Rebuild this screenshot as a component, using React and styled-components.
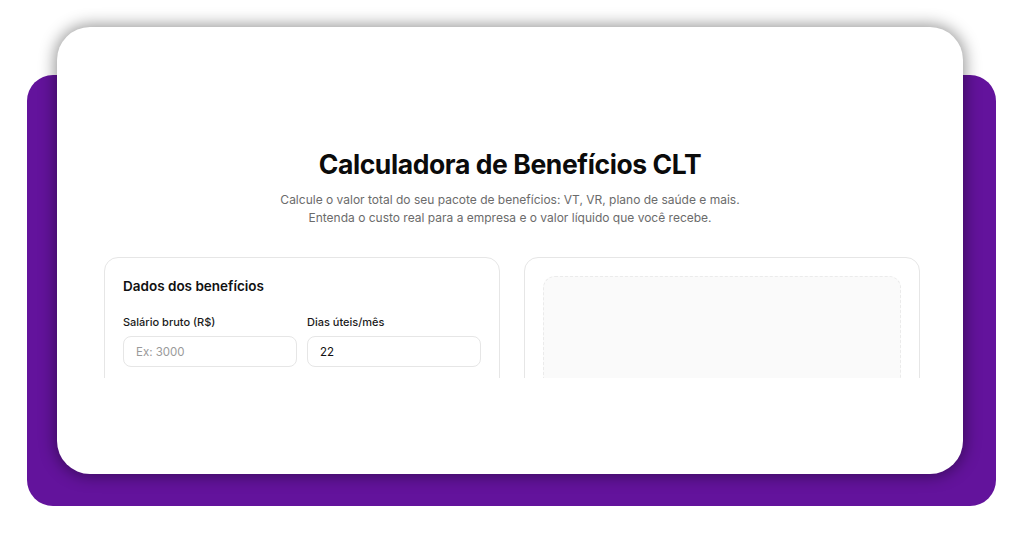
import styled, { createGlobalStyle } from "styled-components";

const Global = createGlobalStyle`
  html, body {
    margin: 0;
    padding: 0;
    background: #ffffff;
  }
  body {
    font-family: Inter, "Noto Sans", "Liberation Sans", sans-serif;
    color: #111111;
  }
  * { box-sizing: border-box; }
`;

const App = () => {
  return (
    <>
      <Global />
      <Stage>
        <Backdrop />
        <Window>
          <Viewport>
            <Title>Calculadora de Benefícios CLT</Title>
            <Subtitle>
              Calcule o valor total do seu pacote de benefícios: VT, VR, plano de saúde e mais.
              <br />
              Entenda o custo real para a empresa e o valor líquido que você recebe.
            </Subtitle>
            <Columns>
              <Card>
                <CardTitle>Dados dos benefícios</CardTitle>
                <FieldRow>
                  <Field>
                    <Label>Salário bruto (R$)</Label>
                    <Input placeholder="Ex: 3000" />
                  </Field>
                  <Field>
                    <Label>Dias úteis/mês</Label>
                    <Input defaultValue="22" />
                  </Field>
                </FieldRow>
              </Card>
              <Card>
                <ResultPlaceholder />
              </Card>
            </Columns>
          </Viewport>
        </Window>
      </Stage>
    </>
  );
};

export default App;

const Stage = styled.div`
  display: grid;
  width: 1024px;
  height: 536px;
  overflow: hidden;
`;

const Backdrop = styled.div`
  grid-area: 1 / 1;
  margin: 75px 0 0 27px;
  width: 969px;
  height: 431px;
  background: #63139c;
  border-radius: 26px;
`;

const Window = styled.div`
  grid-area: 1 / 1;
  margin: 27px 0 0 57px;
  width: 906px;
  height: 447px;
  background: #ffffff;
  border-radius: 33px;
  box-shadow: 0 0 16px 2px rgba(0, 0, 0, 0.42);
`;

const Viewport = styled.div`
  height: 351px;
  overflow: hidden;
  padding-top: 119px;
  display: flex;
  flex-direction: column;
  align-items: center;
`;

const Title = styled.h1`
  margin: 0;
  font-size: 26.5px;
  line-height: 36px;
  font-weight: 700;
  letter-spacing: -0.4px;
  color: #0b0b0b;
`;

const Subtitle = styled.p`
  margin: 9px 0 0;
  font-size: 12px;
  line-height: 18px;
  color: #6b6b6b;
  text-align: center;
`;

const Columns = styled.div`
  margin-top: 30px;
  width: 816px;
  margin-left: 4px;
  display: grid;
  grid-template-columns: 396px 396px;
  gap: 24px;
`;

const Card = styled.div`
  min-width: 0;
  border: 1px solid #e6e6e6;
  border-radius: 14px;
  padding: 18px;
  height: 200px;
`;

const CardTitle = styled.h2`
  margin: 0;
  font-size: 13.5px;
  line-height: 20px;
  font-weight: 600;
  color: #111111;
`;

const FieldRow = styled.div`
  margin-top: 19px;
  display: grid;
  grid-template-columns: minmax(0, 1fr) minmax(0, 1fr);
  gap: 10px;
`;

const Field = styled.div`
  min-width: 0;
  display: flex;
  flex-direction: column;
  gap: 7px;
`;

const Label = styled.label`
  font-size: 11px;
  line-height: 14px;
  font-weight: 500;
  color: #1a1a1a;
`;

const Input = styled.input`
  width: 100%;
  min-width: 0;
  height: 31px;
  border: 1px solid #e6e6e6;
  border-radius: 8px;
  padding: 0 12px;
  font-family: inherit;
  font-size: 11.5px;
  color: #111111;
  outline: none;
  &::placeholder {
    color: #9a9a9a;
  }
`;

const ResultPlaceholder = styled.div`
  height: 200px;
  border: 1px dashed #ebebeb;
  border-radius: 12px;
  background: #fafafa;
`;
